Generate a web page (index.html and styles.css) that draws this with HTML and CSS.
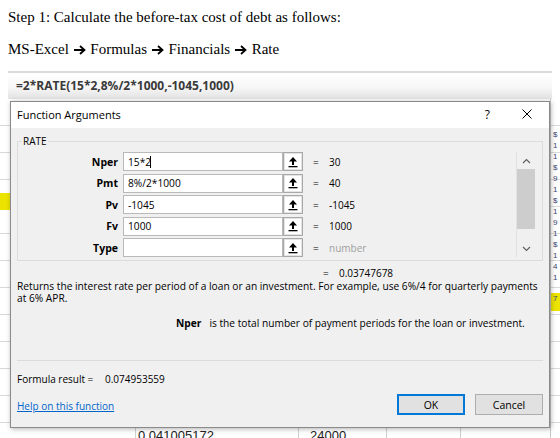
FILE: index.html
```html
<!DOCTYPE html>
<html lang="en">
  <head>
    <meta charset="UTF-8" />
    <title>Before-tax cost of debt - RATE</title>
    <link rel="stylesheet" href="styles.css">
  </head>
  <body>
    <div class="doc">
      <p>Step 1: Calculate the before-tax cost of debt as follows:</p>
      <p class="path">MS-Excel <svg class="arr" width="12" height="10" viewBox="0 0 12 10"><path d="M0 5 H10 M6 1 L10.5 5 L6 9" stroke="#000" stroke-width="1.8" fill="none" /></svg> Formulas <svg class="arr" width="12" height="10" viewBox="0 0 12 10"><path d="M0 5 H10 M6 1 L10.5 5 L6 9" stroke="#000" stroke-width="1.8" fill="none" /></svg> Financials <svg class="arr" width="12" height="10" viewBox="0 0 12 10"><path d="M0 5 H10 M6 1 L10.5 5 L6 9" stroke="#000" stroke-width="1.8" fill="none" /></svg> Rate</p>
    </div>

    <div class="formula-bar">=2*RATE(15*2,8%/2*1000,-1045,1000)</div>

    <div class="sheet">
      <!-- worksheet columns peeking out around the dialog -->
      <div class="col-left">
        <div class="hl-cell"></div>
      </div>
      <div class="col-mid">
        <div class="cells">
          <div class="cell"></div>
          <div class="cell">0.041005172</div>
          <div class="cell num">24000</div>
          <div class="cell"></div>
          <div class="cell"></div>
        </div>
      </div>
      <div class="col-right">
        <div class="edge">$</div>
        <div class="edge">1</div>
        <div class="edge">1</div>
        <div class="edge">$</div>
        <div class="edge">9</div>
        <div class="edge">1</div>
        <div class="edge">$</div>
        <div class="edge">1</div>
        <div class="edge">9</div>
        <div class="edge">1</div>
        <div class="edge">$</div>
        <div class="edge">1</div>
        <div class="edge">4</div>
        <div class="edge">1</div>
        <div class="edge hl">7</div>
      </div>

      <!-- Function Arguments dialog -->
      <div class="dialog">
        <div class="titlebar">
          <span class="title">Function Arguments</span>
          <span class="help-btn">?</span>
          <svg class="close" width="10" height="10" viewBox="0 0 10 10">
            <path d="M0.5 0.5 L9.5 9.5 M9.5 0.5 L0.5 9.5" stroke="#000" stroke-width="1" fill="none" />
          </svg>
        </div>

        <div class="dlg-body">
          <fieldset class="args">
            <legend>RATE</legend>
            <div class="arg-rows">
              <div class="arg">
                <label for="nper">Nper</label>
                <span class="field"><input type="text" id="nper" value="15*2" /><span class="caret"></span></span>
                <span class="ref-btn"><svg width="12" height="12" viewBox="0 0 12 12"><path d="M6 1 L10 5.5 L7 5.5 L7 9 L5 9 L5 5.5 L2 5.5 Z" fill="#000" /><rect x="1.5" y="10" width="9" height="1.3" fill="#000" /></svg></span>
                <span class="eq">=</span>
                <span class="val">30</span>
              </div>
              <div class="arg">
                <label for="pmt">Pmt</label>
                <span class="field"><input type="text" id="pmt" value="8%/2*1000" /></span>
                <span class="ref-btn"><svg width="12" height="12" viewBox="0 0 12 12"><path d="M6 1 L10 5.5 L7 5.5 L7 9 L5 9 L5 5.5 L2 5.5 Z" fill="#000" /><rect x="1.5" y="10" width="9" height="1.3" fill="#000" /></svg></span>
                <span class="eq">=</span>
                <span class="val">40</span>
              </div>
              <div class="arg">
                <label for="pv">Pv</label>
                <span class="field"><input type="text" id="pv" value="-1045" /></span>
                <span class="ref-btn"><svg width="12" height="12" viewBox="0 0 12 12"><path d="M6 1 L10 5.5 L7 5.5 L7 9 L5 9 L5 5.5 L2 5.5 Z" fill="#000" /><rect x="1.5" y="10" width="9" height="1.3" fill="#000" /></svg></span>
                <span class="eq">=</span>
                <span class="val">-1045</span>
              </div>
              <div class="arg">
                <label for="fv">Fv</label>
                <span class="field"><input type="text" id="fv" value="1000" /></span>
                <span class="ref-btn"><svg width="12" height="12" viewBox="0 0 12 12"><path d="M6 1 L10 5.5 L7 5.5 L7 9 L5 9 L5 5.5 L2 5.5 Z" fill="#000" /><rect x="1.5" y="10" width="9" height="1.3" fill="#000" /></svg></span>
                <span class="eq">=</span>
                <span class="val">1000</span>
              </div>
              <div class="arg">
                <label for="type">Type</label>
                <span class="field"><input type="text" id="type" value="" /></span>
                <span class="ref-btn"><svg width="12" height="12" viewBox="0 0 12 12"><path d="M6 1 L10 5.5 L7 5.5 L7 9 L5 9 L5 5.5 L2 5.5 Z" fill="#000" /><rect x="1.5" y="10" width="9" height="1.3" fill="#000" /></svg></span>
                <span class="eq">=</span>
                <span class="val muted">number</span>
              </div>
            </div>
            <div class="scroll">
              <div class="sb-arrow">
                <svg width="9" height="6" viewBox="0 0 9 6"><path d="M1 5 L4.5 1.5 L8 5" stroke="#606060" stroke-width="1.2" fill="none" /></svg>
              </div>
              <div class="sb-thumb"></div>
              <div class="sb-track"></div>
              <div class="sb-arrow">
                <svg width="9" height="6" viewBox="0 0 9 6"><path d="M1 1 L4.5 4.5 L8 1" stroke="#606060" stroke-width="1.2" fill="none" /></svg>
              </div>
            </div>
          </fieldset>

          <div class="result-line"><span class="eq">=</span><span>0.03747678</span></div>

          <p class="desc">Returns the interest rate per period of a loan or an investment. For example, use 6%/4 for quarterly payments<br>at 6% APR.</p>

          <p class="arg-help"><b>Nper</b>is the total number of payment periods for the loan or investment.</p>

          <div class="sep"></div>

          <p class="formula-result"><span class="fr-label">Formula result =</span>0.074953559</p>

          <div class="footer">
            <a href="#" class="help-link">Help on this function</a>
            <button class="btn default">OK</button>
            <button class="btn">Cancel</button>
          </div>
        </div>
      </div>
    </div>
  </body>
</html>
```

FILE: styles.css
```css
body {
  margin: 0;
  width: 560px;
  height: 438px;
  overflow: hidden;
  background-color: #fff;
}

.doc {
  padding: 9px 8px 0;
  font-family: "Liberation Serif", serif;
  font-size: 15px;
  line-height: 16px;
  color: #000;
}

.doc p {
  margin: 0;
}

.doc .path {
  margin-top: 16px;
}

.arr {
  margin: 0 1px;
  vertical-align: -1px;
}

.formula-bar {
  margin: 14px 8px 0;
  height: 26px;
  padding-left: 8px;
  border-top: 2px solid #dadada;
  background: linear-gradient(#fff, #f7f7f7 55%, #e2e2e2);
  font-family: "Open Sans", sans-serif;
  font-weight: bold;
  font-size: 12px;
  line-height: 26px;
  color: #3a3a3a;
}

/* worksheet behind the dialog */
.sheet {
  position: relative;
  display: flex;
  height: 339px;
  background: repeating-linear-gradient(to bottom, transparent 0, transparent 26px, #d9d9d9 26px, #d9d9d9 27px);
}

.col-left {
  width: 10px;
}

.hl-cell {
  margin-top: 94px;
  height: 17px;
  background-color: #ece400;
}

.col-mid {
  flex: 1;
  display: flex;
  flex-direction: column;
  justify-content: flex-end;
}

.cells {
  display: grid;
  grid-template-columns: 125px 163px 88px 74px 1fr;
  height: 11px;
  overflow: hidden;
  background-color: #fff;
  font-family: "Liberation Sans", sans-serif;
  font-size: 13px;
  line-height: 14px;
  color: #222;
}

.cell {
  padding: 2px 0 0 2px;
  border-left: 1px solid #d0d0d0;
}

.cell:first-child {
  border-left: none;
}

.cell.num {
  padding-left: 11px;
}

.col-right {
  width: 9px;
  padding-top: 30px;
  border-left: 1px solid #c8c8c8;
  font-family: "Liberation Sans", sans-serif;
  font-size: 8px;
  line-height: 11px;
  color: #3a4670;
  overflow: hidden;
}

.edge {
  padding-left: 2px;
}

.edge.hl {
  margin-top: 10px;
  height: 18px;
  background-color: #ece400;
}

/* dialog */
.dialog {
  position: absolute;
  left: 10px;
  top: 2px;
  width: 540px;
  height: 327px;
  box-sizing: border-box;
  border: 1px solid #8a8a8a;
  background-color: #f0f0f0;
  box-shadow: 1px 1px 5px rgba(0, 0, 0, 0.3);
  font-family: "Open Sans", sans-serif;
  font-size: 10px;
  color: #000;
}

.titlebar {
  display: flex;
  align-items: center;
  height: 26px;
  padding: 0 0 2px 6px;
  box-sizing: border-box;
  background-color: #fff;
}

.title {
  font-size: 11px;
}

.help-btn {
  margin-left: auto;
  font-size: 12px;
}

.close {
  margin: 0 17px 0 32px;
}

.dlg-body {
  padding: 0 6px;
}

.args {
  display: flex;
  margin: 7px 0 0;
  padding: 5px 7px 3px 0;
  border: 1px solid #dcdcdc;
}

.args legend {
  margin-left: 4px;
  padding: 0 1px;
  line-height: 12px;
}

.arg-rows {
  flex: 1;
  display: flex;
  flex-direction: column;
  gap: 2.5px;
}

.arg {
  display: flex;
  align-items: center;
  height: 19px;
}

.arg label {
  width: 105px;
  padding-right: 5px;
  box-sizing: border-box;
  text-align: right;
  font-weight: bold;
  font-size: 10.5px;
}

.field {
  position: relative;
  display: flex;
}

.arg input {
  width: 160px;
  height: 19px;
  box-sizing: border-box;
  margin: 0;
  padding: 0 4px;
  border: 1px solid #b9b9b9;
  background-color: #fff;
  font-family: "Open Sans", sans-serif;
  font-size: 10.2px;
  color: #000;
  outline: none;
}

/* text cursor after "15*2" */
.caret {
  position: absolute;
  left: 27px;
  top: 4px;
  width: 1px;
  height: 12px;
  background-color: #000;
}

.ref-btn {
  display: flex;
  align-items: center;
  justify-content: center;
  width: 20px;
  height: 19px;
  box-sizing: border-box;
  border: 1px solid #a8a8a8;
  box-shadow: inset 0 0 0 1px #e4e4e4;
  background-color: #fff;
}

.eq {
  width: 16px;
  margin-left: 10px;
}

.val.muted {
  color: #a0a0a0;
}

.scroll {
  display: flex;
  flex-direction: column;
  width: 19px;
  box-sizing: border-box;
  border-left: 1px solid #e2e2e2;
}

.sb-arrow {
  display: flex;
  align-items: center;
  justify-content: center;
  height: 17px;
}

.sb-thumb {
  height: 60px;
  background-color: #cdcdcd;
}

.sb-track {
  flex: 1;
}

.result-line {
  display: flex;
  margin-top: 6px;
  padding-left: 296px;
  line-height: 12px;
}

.desc {
  margin: 1px 0 0;
  font-size: 10.2px;
  line-height: 12px;
}

.arg-help {
  margin: 13px 0 0;
  padding-left: 159px;
  font-size: 10.2px;
  line-height: 12px;
}

.arg-help b {
  margin-right: 8px;
}

.sep {
  margin-top: 31px;
  border-top: 1px solid #dcdcdc;
}

.formula-result {
  margin: 12px 0 0;
  line-height: 12px;
}

.fr-label {
  display: inline-block;
  width: 88px;
}

.footer {
  display: flex;
  align-items: center;
  margin-top: 9px;
}

.help-link {
  margin-right: auto;
  padding-top: 3px;
  color: #0066cc;
}

.btn {
  width: 68px;
  height: 21px;
  margin-left: 10px;
  padding: 0;
  border: 1px solid #adadad;
  background-color: #e1e1e1;
  font-family: "Open Sans", sans-serif;
  font-size: 10.5px;
  color: #000;
}

.btn.default {
  border-color: #0078d7;
  box-shadow: inset 0 0 0 1px #0078d7;
}
```
